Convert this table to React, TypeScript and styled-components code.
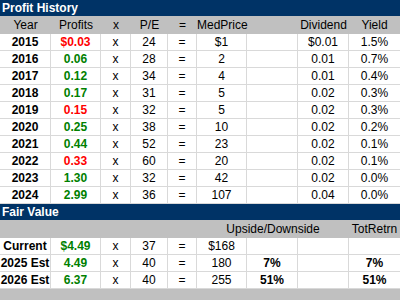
import React from 'react'
import styled, { createGlobalStyle } from 'styled-components'

const GlobalStyle = createGlobalStyle`
  html, body {
    margin: 0;
    padding: 0;
    background: #ffffff;
  }
  body {
    font-family: 'Liberation Sans', Arial, sans-serif;
    font-size: 12px;
    color: #000000;
  }
`

const COLS = '51px 50px 30px 37px 29px 50px 51px 51px 51px'

const Sheet = styled.div`
  width: 400px;
  height: 300px;
  overflow: hidden;
  display: flex;
  flex-direction: column;
  background: #ffffff;
`

const SectionBar = styled.div`
  height: 16px;
  line-height: 16px;
  background: #003366;
  color: #ffffff;
  font-weight: bold;
  padding-left: 2px;
  white-space: nowrap;
`

const HeadRow = styled.div`
  display: grid;
  grid-template-columns: ${COLS};
  height: 18px;
  background: #c0c0c0;
`

const HeadCell = styled.div<{ $span?: number }>`
  grid-column: ${(p) => (p.$span ? `span ${p.$span}` : 'auto')};
  line-height: 18px;
  text-align: center;
  white-space: nowrap;
  overflow: visible;
`

const Row = styled.div`
  display: grid;
  grid-template-columns: ${COLS};
  height: 17px;
`

const Cell = styled.div<{ $bold?: boolean; $tone?: 'red' | 'green' }>`
  box-sizing: border-box;
  height: 17px;
  line-height: 16px;
  border-right: 1px solid #d9d9d9;
  border-bottom: 1px solid #d9d9d9;
  text-align: center;
  white-space: nowrap;
  font-weight: ${(p) => (p.$bold ? 'bold' : 'normal')};
  color: ${(p) =>
    p.$tone === 'red' ? '#ff0000' : p.$tone === 'green' ? '#008000' : '#000000'};
  &:last-child {
    border-right: none;
  }
`

const BottomStrip = styled.div`
  flex: 1;
  background: #c0c0c0;
`

type Hist = {
  year: string
  profit: string
  tone: 'red' | 'green'
  pe: string
  price: string
  div: string
  yld: string
}

const history: Hist[] = [
  { year: '2015', profit: '$0.03', tone: 'red', pe: '24', price: '$1', div: '$0.01', yld: '1.5%' },
  { year: '2016', profit: '0.06', tone: 'green', pe: '28', price: '2', div: '0.01', yld: '0.7%' },
  { year: '2017', profit: '0.12', tone: 'green', pe: '34', price: '4', div: '0.01', yld: '0.4%' },
  { year: '2018', profit: '0.17', tone: 'green', pe: '31', price: '5', div: '0.02', yld: '0.3%' },
  { year: '2019', profit: '0.15', tone: 'red', pe: '32', price: '5', div: '0.02', yld: '0.3%' },
  { year: '2020', profit: '0.25', tone: 'green', pe: '38', price: '10', div: '0.02', yld: '0.2%' },
  { year: '2021', profit: '0.44', tone: 'green', pe: '52', price: '23', div: '0.02', yld: '0.1%' },
  { year: '2022', profit: '0.33', tone: 'red', pe: '60', price: '20', div: '0.02', yld: '0.1%' },
  { year: '2023', profit: '1.30', tone: 'green', pe: '32', price: '42', div: '0.02', yld: '0.0%' },
  { year: '2024', profit: '2.99', tone: 'green', pe: '36', price: '107', div: '0.04', yld: '0.0%' },
]

const fair = [
  { label: 'Current', eps: '$4.49', pe: '37', price: '$168', up: '', tot: '' },
  { label: '2025 Est', eps: '4.49', pe: '40', price: '180', up: '7%', tot: '7%' },
  { label: '2026 Est', eps: '6.37', pe: '40', price: '255', up: '51%', tot: '51%' },
]

export default function App() {
  return (
    <Sheet>
      <GlobalStyle />
      <SectionBar>Profit History</SectionBar>
      <HeadRow>
        <HeadCell>Year</HeadCell>
        <HeadCell>Profits</HeadCell>
        <HeadCell>x</HeadCell>
        <HeadCell>P/E</HeadCell>
        <HeadCell>=</HeadCell>
        <HeadCell>MedPrice</HeadCell>
        <HeadCell />
        <HeadCell>Dividend</HeadCell>
        <HeadCell>Yield</HeadCell>
      </HeadRow>
      {history.map((h) => (
        <Row key={h.year}>
          <Cell $bold>{h.year}</Cell>
          <Cell $bold $tone={h.tone}>{h.profit}</Cell>
          <Cell>x</Cell>
          <Cell>{h.pe}</Cell>
          <Cell>=</Cell>
          <Cell>{h.price}</Cell>
          <Cell />
          <Cell>{h.div}</Cell>
          <Cell>{h.yld}</Cell>
        </Row>
      ))}
      <SectionBar>Fair Value</SectionBar>
      <HeadRow>
        <HeadCell />
        <HeadCell />
        <HeadCell />
        <HeadCell />
        <HeadCell />
        <HeadCell $span={3}>Upside/Downside</HeadCell>
        <HeadCell>TotRetrn</HeadCell>
      </HeadRow>
      {fair.map((f) => (
        <Row key={f.label}>
          <Cell $bold>{f.label}</Cell>
          <Cell $bold $tone="green">{f.eps}</Cell>
          <Cell>x</Cell>
          <Cell>{f.pe}</Cell>
          <Cell>=</Cell>
          <Cell>{f.price}</Cell>
          <Cell $bold>{f.up}</Cell>
          <Cell />
          <Cell $bold>{f.tot}</Cell>
        </Row>
      ))}
      <BottomStrip />
    </Sheet>
  )
}
